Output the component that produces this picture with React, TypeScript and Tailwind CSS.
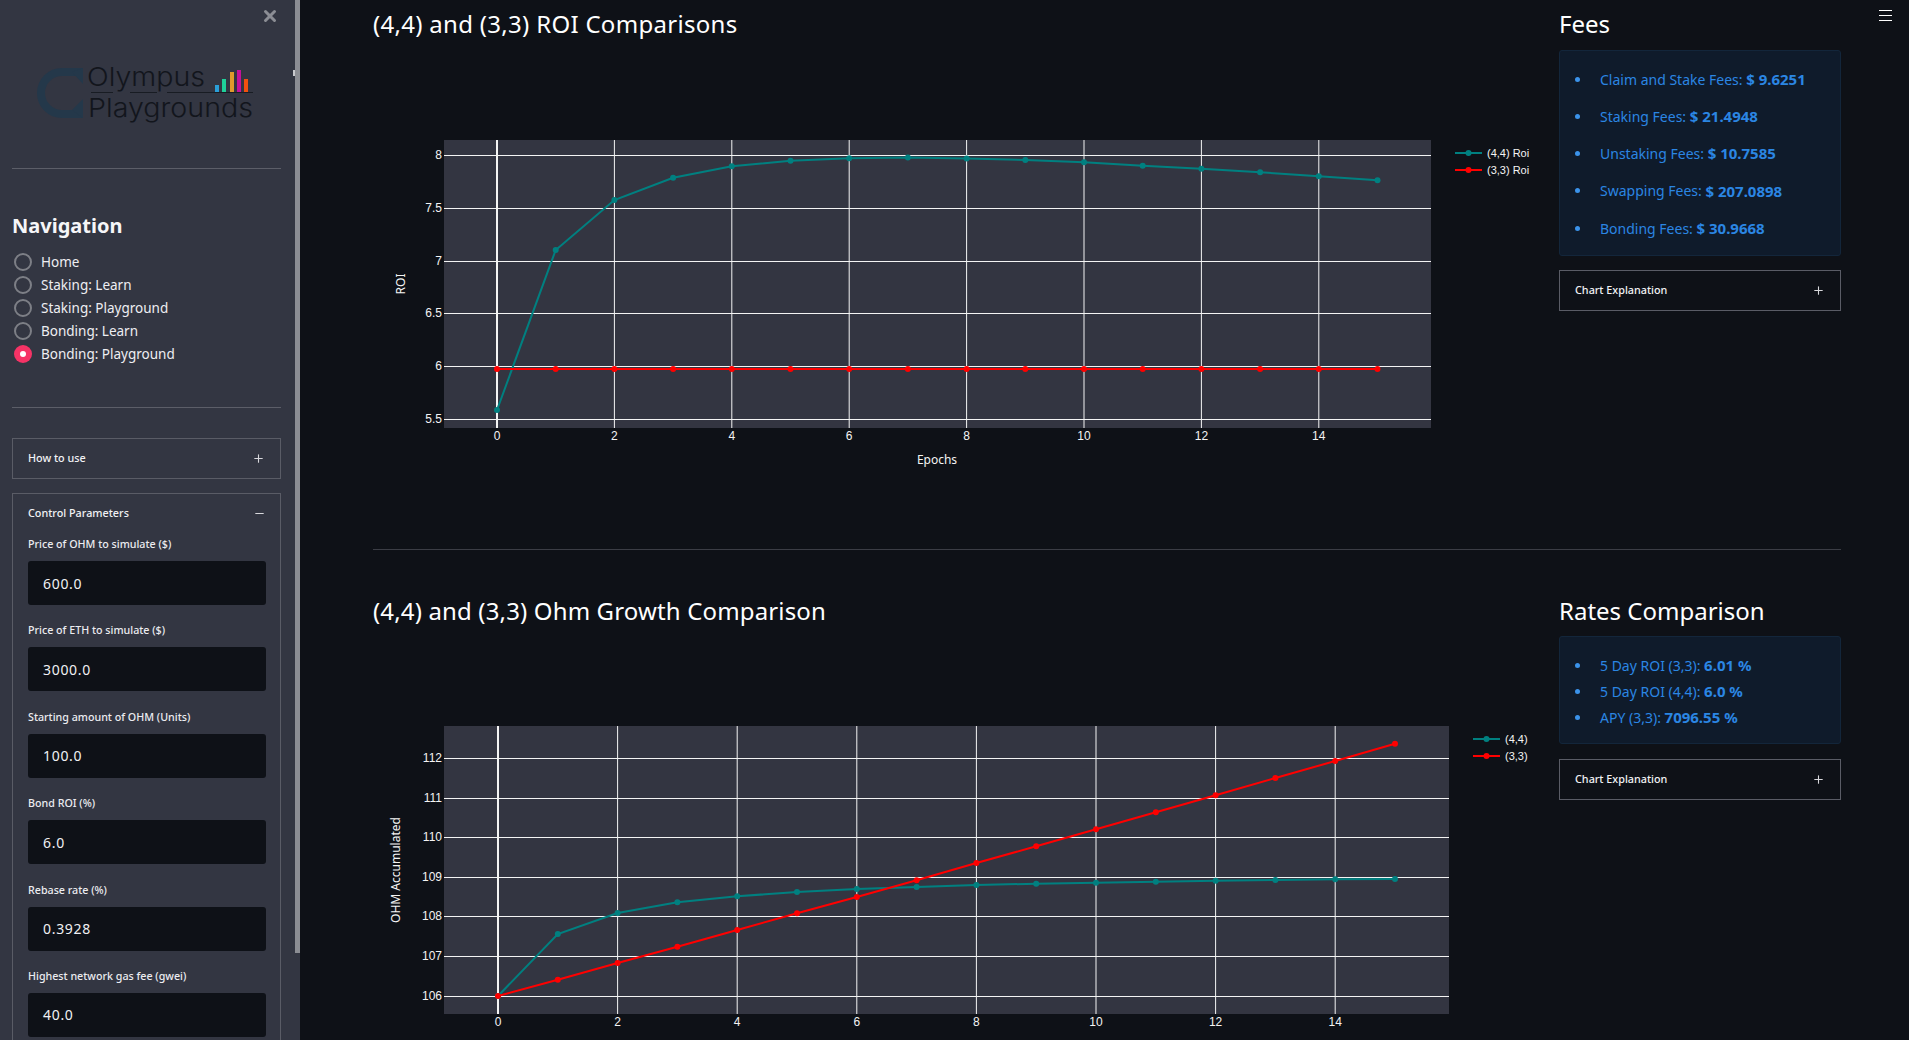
import { Minus, Plus, X } from "lucide-react";

const navItems = ["Home", "Staking: Learn", "Staking: Playground", "Bonding: Learn", "Bonding: Playground"];

const params = [
  { label: "Price of OHM to simulate ($)", value: "600.0" },
  { label: "Price of ETH to simulate ($)", value: "3000.0" },
  { label: "Starting amount of OHM (Units)", value: "100.0" },
  { label: "Bond ROI (%)", value: "6.0" },
  { label: "Rebase rate (%)", value: "0.3928" },
  { label: "Highest network gas fee (gwei)", value: "40.0" },
];

const fees = [
  { label: "Claim and Stake Fees:", value: "$ 9.6251" },
  { label: "Staking Fees:", value: "$ 21.4948" },
  { label: "Unstaking Fees:", value: "$ 10.7585" },
  { label: "Swapping Fees:", value: "$ 207.0898" },
  { label: "Bonding Fees:", value: "$ 30.9668" },
];

const rates = [
  { label: "5 Day ROI (3,3):", value: "6.01 %" },
  { label: "5 Day ROI (4,4):", value: "6.0 %" },
  { label: "APY (3,3):", value: "7096.55 %" },
];

// pixel positions read off the reference, one per epoch
const roiTeal = [410, 250, 200, 177.7, 166.3, 160.7, 158.3, 157.5, 158.5, 160, 162.3, 165.7, 168.7, 172.3, 176.3, 180.3];
const roiRed = Array.from({ length: 16 }, () => 369);
const ohmTeal = [997, 935, 914, 903.3, 897.3, 893, 890, 888, 886, 884.7, 883.7, 882.7, 881.7, 881, 880.3, 880];
const ohmRed = [997, 980.7, 964, 947.7, 931, 914.3, 898, 881.3, 864, 847.3, 830.3, 813.3, 796.3, 779, 762, 744.7];

interface ChartProps {
  box: { y: number; h: number };
  plot: { left: number; right: number; top: number; bottom: number };
  x0: number;
  step: number;
  yTicks: { label: string; y: number }[];
  teal: number[];
  red: number[];
  legendX: number;
  legendY: number;
  legend: [string, string];
  yTitle: { text: string; x: number; y: number };
  xTitleY?: number;
}

function Chart({ box, plot, x0, step, yTicks, teal, red, legendX, legendY, legend, yTitle, xTitleY }: ChartProps) {
  const xs = teal.map((_, i) => x0 + i * step);
  const line = (ys: number[]) => ys.map((y, i) => `${xs[i]},${y}`).join(" ");
  const evenTicks = [0, 2, 4, 6, 8, 10, 12, 14];
  return (
    <svg
      width={1164}
      height={box.h}
      viewBox={`373 ${box.y} 1164 ${box.h}`}
      className="block font-['Liberation_Sans',sans-serif]"
    >
      <rect x={plot.left} y={plot.top} width={plot.right - plot.left} height={plot.bottom - plot.top} fill="#333541" />
      {yTicks.map((t) => (
        <g key={t.label}>
          <line x1={plot.left} x2={plot.right} y1={t.y} y2={t.y} stroke="#f4f4f4" />
          <text x={442} y={t.y + 3.5} textAnchor="end" fontSize={12} fill="#f4f4f4">
            {t.label}
          </text>
        </g>
      ))}
      {evenTicks.map((n) => (
        <g key={n}>
          <line
            x1={x0 + n * step}
            x2={x0 + n * step}
            y1={plot.top}
            y2={plot.bottom}
            stroke="#f4f4f4"
            strokeWidth={n === 0 ? 2 : 1}
          />
          <text x={x0 + n * step} y={plot.bottom + 12} textAnchor="middle" fontSize={12} fill="#f4f4f4">
            {n}
          </text>
        </g>
      ))}
      <polyline points={line(teal)} fill="none" stroke="#008080" strokeWidth={2} />
      {teal.map((y, i) => (
        <circle key={i} cx={xs[i]} cy={y} r={3} fill="#008080" />
      ))}
      <polyline points={line(red)} fill="none" stroke="#ff0000" strokeWidth={2} />
      {red.map((y, i) => (
        <circle key={i} cx={xs[i]} cy={y} r={3} fill="#ff0000" />
      ))}
      <text
        transform={`rotate(-90 ${yTitle.x} ${yTitle.y})`}
        x={yTitle.x}
        y={yTitle.y}
        textAnchor="middle"
        fontSize={12}
        fill="#f4f4f4"
        className="font-['Noto_Sans',sans-serif]"
      >
        {yTitle.text}
      </text>
      {xTitleY && (
        <text x={937} y={xTitleY} textAnchor="middle" fontSize={12} fill="#f4f4f4" className="font-['Noto_Sans',sans-serif]">
          Epochs
        </text>
      )}
      {legend.map((name, i) => {
        const ly = legendY + i * 17;
        const color = i === 0 ? "#008080" : "#ff0000";
        return (
          <g key={name}>
            <line x1={legendX} x2={legendX + 27} y1={ly} y2={ly} stroke={color} strokeWidth={2} />
            <circle cx={legendX + 13.5} cy={ly} r={3} fill={color} />
            <text x={legendX + 32} y={ly + 4} fontSize={11} fill="#f4f4f4">
              {name}
            </text>
          </g>
        );
      })}
    </svg>
  );
}

function Logo() {
  return (
    <svg width={250} height={90} viewBox="20 50 250 90" className="block font-['Inter',sans-serif]">
      <path d="M83 72 H62 A21 21 0 0 0 62 114 H83" fill="none" stroke="#24384a" strokeWidth={8} />
      <path d="M83 68 V84 L72 72 Z M83 99 V118 L72 110 Z" fill="#24384a" />
      <text x={87} y={86} fontSize={26} fontWeight={300} fill="#12151c" textLength={118} lengthAdjust="spacingAndGlyphs">
        Olympus
      </text>
      <text x={88} y={117} fontSize={26} fontWeight={300} fill="#12151c" textLength={165} lengthAdjust="spacingAndGlyphs">
        Playgrounds
      </text>
      <path d="M91 92.5 H113 M130 92.5 H157 M167 92.5 H253" stroke="#12151c" strokeWidth={0.8} />
      <rect x={215} y={85} width={4} height={7} fill="#2a9fd8" />
      <rect x={222} y={79} width={4} height={13} fill="#1fd19a" />
      <rect x={230} y={72} width={4} height={20} fill="#e09a2b" />
      <rect x={237} y={70} width={4} height={22} fill="#c4119a" />
      <rect x={244} y={79} width={4} height={13} fill="#f2500f" />
    </svg>
  );
}

function Expander({ title }: { title: string }) {
  return (
    <div className="flex h-[41px] items-center justify-between border border-[#5a5c66] pl-[15px] pr-[15px] text-[10.8px] font-medium text-[#f2f2f5]">
      <span>{title}</span>
      <Plus size={13} strokeWidth={2} className="text-[#d8d8dc]" />
    </div>
  );
}

function Callout({ rows, className }: { rows: { label: string; value: string }[]; className: string }) {
  return (
    <div className={`rounded-[3px] border border-[#13263b] bg-[#0f1b2b] pl-[40px] text-[14px] text-[#2b86e3] ${className}`}>
      {rows.map((r) => (
        <div key={r.label} className="relative flex items-center whitespace-pre">
          <span className="absolute left-[-25px] size-[5px] rounded-full bg-[#3b93ea]" />
          {r.label} <b className="text-[15px] font-bold">{r.value}</b>
        </div>
      ))}
    </div>
  );
}

export default function App() {
  return (
    <div className="flex h-screen overflow-hidden bg-[#0e1117] font-['Noto_Sans',sans-serif] text-white">
      <aside className="relative flex w-[300px] shrink-0 bg-[#333642]">
        <div className="w-[295px] shrink-0">
          <div className="relative h-[169px]">
            <X size={18} strokeWidth={4} className="absolute left-[261px] top-[7px] text-[#8b8d94]" />
            <div className="absolute left-[20px] top-[50px]">
              <Logo />
            </div>
            <div className="absolute bottom-0 left-[12px] right-[14px] h-px bg-[#5c5e68]" />
            <div className="absolute left-[293px] top-[70px] h-[6px] w-[2px] bg-[#c8c9cd]" />
          </div>
          <h2 className="ml-[12px] mt-[43px] text-[20px] font-bold leading-[28px] text-[#f6f6f8]">Navigation</h2>
          <ul className="ml-[14px] mt-[10px] flex flex-col">
            {navItems.map((item, i) => (
              <li key={item} className="flex h-[23px] items-center gap-[9px] text-[13.5px] text-[#eeeef2]">
                {i === 4 ? (
                  <span className="flex size-[18px] items-center justify-center rounded-full bg-[#f63366]">
                    <span className="size-[6px] rounded-full bg-white" />
                  </span>
                ) : (
                  <span className="size-[18px] rounded-full border-2 border-[#7d7f86]" />
                )}
                <span className="pt-[2px]">{item}</span>
              </li>
            ))}
          </ul>
          <div className="ml-[12px] mr-[14px] mt-[42px] h-px bg-[#5c5e68]" />
          <div className="ml-[12px] mr-[14px] mt-[30px]">
            <Expander title="How to use" />
            <div className="mt-[14px] border border-[#5a5c66] pl-[15px] pr-[14px]">
              <div className="flex h-[39px] items-center justify-between text-[10.8px] font-medium text-[#f2f2f5]">
                <span>Control Parameters</span>
                <Minus size={13} strokeWidth={2} className="text-[#d8d8dc]" />
              </div>
              {params.map((p) => (
                <div key={p.label} className="h-[86.4px]">
                  <div className="flex h-[28px] items-center pb-[6px] text-[10.7px] font-medium text-[#ececf0]">{p.label}</div>
                  <div className="flex h-[44px] items-center rounded-[3px] bg-[#0e1117] pl-[15px] text-[14px] tracking-[0.7px] text-[#f0f0f3]">
                    {p.value}
                  </div>
                </div>
              ))}
            </div>
          </div>
        </div>
        <div className="h-[953px] w-[5px] bg-[#8b8d93]" />
      </aside>

      <main className="relative flex-1 overflow-hidden pl-[73px]">
        <div className="absolute left-[1579px] top-[10px] flex w-[13px] flex-col gap-[4px]">
          <span className="h-px w-full bg-white" />
          <span className="h-px w-full bg-white" />
          <span className="h-px w-full bg-white" />
        </div>

        <section className="flex gap-[22px]">
          <div className="w-[1164px] shrink-0">
            <h3 className="flex h-[48px] items-center pb-0 text-[24px] tracking-[0.3px]">(4,4) and (3,3) ROI Comparisons</h3>
            <div className="h-[2px]" />
            <Chart
              box={{ y: 50, h: 450 }}
              plot={{ left: 444, right: 1431, top: 140, bottom: 428 }}
              x0={497}
              step={58.7}
              yTicks={[
                { label: "8", y: 155.5 },
                { label: "7.5", y: 208.5 },
                { label: "7", y: 261.5 },
                { label: "6.5", y: 313.5 },
                { label: "6", y: 366.5 },
                { label: "5.5", y: 419.5 },
              ]}
              teal={roiTeal}
              red={roiRed}
              legendX={1455}
              legendY={153}
              legend={["(4,4) Roi", "(3,3) Roi"]}
              yTitle={{ text: "ROI", x: 405, y: 284 }}
              xTitleY={464}
            />
          </div>
          <div className="w-[282px] shrink-0">
            <h3 className="mb-[2px] flex h-[48px] items-center text-[24px]">Fees</h3>
            <Callout rows={fees} className="flex h-[206px] flex-col justify-center gap-[14.25px] pt-[1px] [&>div]:h-[23px]" />
            <div className="mt-[14px]">
              <Expander title="Chart Explanation" />
            </div>
          </div>
        </section>

        <div className="mr-[68px] mt-[49px] h-px bg-[#3b3d45]" />

        <section className="mt-[36px] flex gap-[22px]">
          <div className="w-[1164px] shrink-0">
            <h3 className="flex h-[50px] items-center text-[24px] tracking-[0.15px]">(4,4) and (3,3) Ohm Growth Comparison</h3>
            <Chart
              box={{ y: 637, h: 403 }}
              plot={{ left: 444, right: 1449, top: 727, bottom: 1015 }}
              x0={498}
              step={59.8}
              yTicks={[
                { label: "112", y: 759.5 },
                { label: "111", y: 799.5 },
                { label: "110", y: 838.5 },
                { label: "109", y: 878.5 },
                { label: "108", y: 917.5 },
                { label: "107", y: 957.5 },
                { label: "106", y: 997.5 },
              ]}
              teal={ohmTeal}
              red={ohmRed}
              legendX={1473}
              legendY={740}
              legend={["(4,4)", "(3,3)"]}
              yTitle={{ text: "OHM Accumulated", x: 400, y: 871 }}
            />
          </div>
          <div className="w-[282px] shrink-0">
            <h3 className="flex h-[50px] items-center text-[24px]">Rates Comparison</h3>
            <Callout rows={rates} className="flex h-[108px] flex-col justify-center gap-[4px] pt-[2px] [&>div]:h-[22px]" />
            <div className="mt-[15px]">
              <Expander title="Chart Explanation" />
            </div>
          </div>
        </section>
      </main>
    </div>
  );
}
